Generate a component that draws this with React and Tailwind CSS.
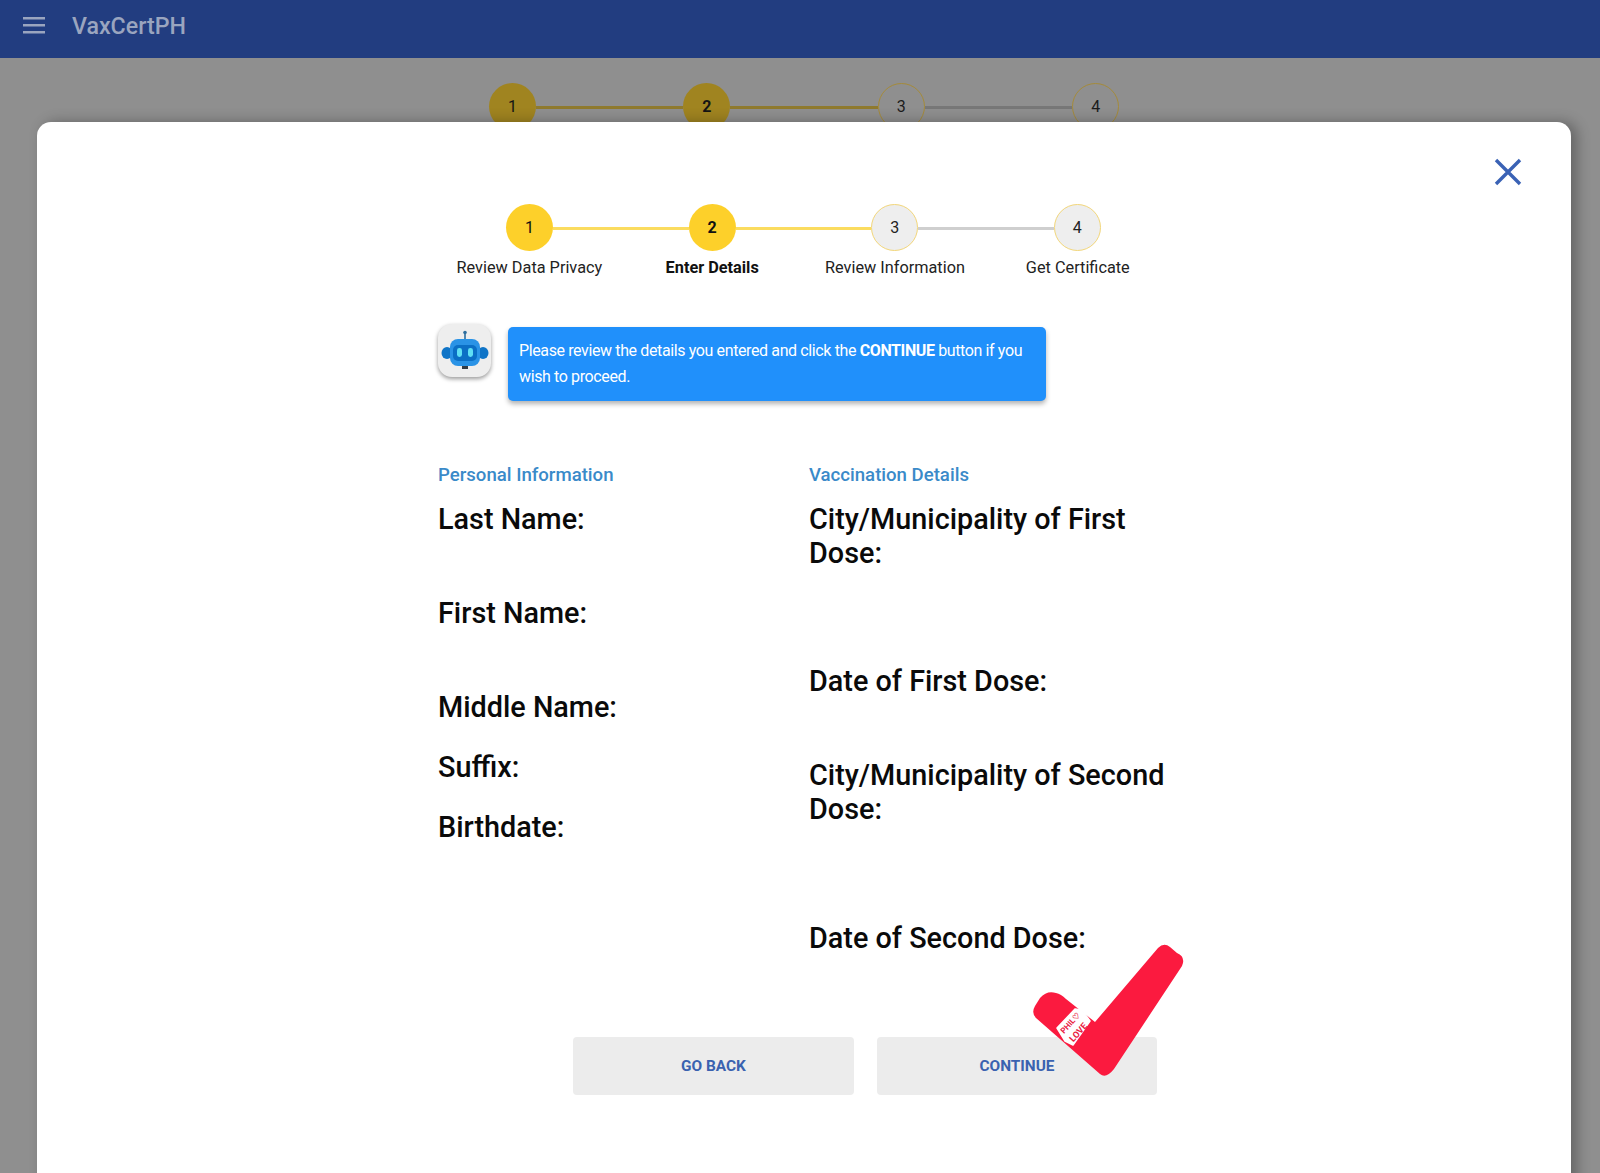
const steps = [
  { n: 1, label: "Review Data Privacy", state: "done" },
  { n: 2, label: "Enter Details", state: "active" },
  { n: 3, label: "Review Information", state: "todo" },
  { n: 4, label: "Get Certificate", state: "todo" },
];

function Circle({ n, state, dim }) {
  const styles = dim
    ? state === "todo"
      ? "border-[1.5px] border-[#a58b3a] bg-[#8f8f8f] text-[#1c1c1c]"
      : "bg-[#a08420] text-[#141414]"
    : state === "todo"
    ? "border-[1.5px] border-[#f2d67a] bg-[#eeeeee] text-[#222222]"
    : "bg-[#fdd02a] text-[#111111]";
  return (
    <div
      className={`flex h-[47px] w-[47px] shrink-0 items-center justify-center rounded-full text-base ${state === "active" ? "font-bold" : "font-normal"} ${styles}`}
    >
      {n}
    </div>
  );
}

function StepLine({ on, dim, width }) {
  const color = dim
    ? on
      ? "bg-[#8f7a2e]"
      : "bg-[#777777]"
    : on
    ? "bg-[#fbdc5f]"
    : "bg-[#cfcfcf]";
  return <div className={`mt-[2px] h-[3px] ${width} ${color}`} />;
}

function Circles({ dim, width }) {
  return (
    <div className="flex items-center">
      <Circle n={1} state="done" dim={dim} />
      <StepLine on dim={dim} width={width} />
      <Circle n={2} state="active" dim={dim} />
      <StepLine on dim={dim} width={width} />
      <Circle n={3} state="todo" dim={dim} />
      <StepLine dim={dim} width={width} />
      <Circle n={4} state="todo" dim={dim} />
    </div>
  );
}

function Robot() {
  return (
    <div className="flex h-[53px] w-[53px] shrink-0 items-center justify-center rounded-[14px] bg-[#eeeeee] shadow-[0_2px_4px_rgba(0,0,0,0.4)]">
      <svg width="48" height="44" viewBox="0 0 48 44">
        <rect x="23.2" y="4" width="1.6" height="8" fill="#2f6f9f" />
        <circle cx="24" cy="3.5" r="1.8" fill="#2f6f9f" />
        <ellipse cx="6" cy="24" rx="5.5" ry="6" fill="#0f74c7" />
        <ellipse cx="42" cy="24" rx="5.5" ry="6" fill="#0f74c7" />
        <rect x="9" y="10" width="30" height="27" rx="8" fill="#2a93e6" />
        <rect x="12" y="16" width="24" height="16" rx="5" fill="#0b6fc5" />
        <rect x="16" y="19" width="5" height="9" rx="2.4" fill="#5fe0f5" />
        <rect x="27" y="19" width="5" height="9" rx="2.4" fill="#5fe0f5" />
        <rect x="21" y="37" width="6" height="3" fill="#333b44" />
      </svg>
    </div>
  );
}

function Check() {
  return (
    <svg
      className="absolute left-[1030px] top-[943px]"
      width="156"
      height="136"
      viewBox="1030 943 156 136"
    >
      <path
        d="M1158 948 Q1164 942 1170 947 L1177 953 Q1186 957 1182 966 L1114 1069 Q1106 1079 1100 1074 L1036 1018 Q1031 1013 1035 1006 L1040 998 Q1047 990 1056 993 Q1061 994 1066 999 L1095 1022 Z"
        fill="#fb1a3f"
      />
      <path
        d="M1057 1028 L1075 1009 L1082 1010 L1090 1021 L1073 1045 L1065 1041 Z"
        fill="#ffffff"
        stroke="#ffffff"
        strokeWidth="1.5"
        strokeLinejoin="round"
      />
      <text
        transform="rotate(-48 1070 1023)"
        x="1070"
        y="1026"
        textAnchor="middle"
        fontSize="8"
        fontWeight="700"
        fill="#e9203f"
        fontFamily="Roboto, sans-serif"
      >
        PHIL♡
      </text>
      <text
        transform="rotate(-48 1078 1032)"
        x="1078"
        y="1035.5"
        textAnchor="middle"
        fontSize="9"
        fontWeight="700"
        fill="#e9203f"
        fontFamily="Roboto, sans-serif"
      >
        LOVE
      </text>
    </svg>
  );
}

function Field({ children, className }) {
  return (
    <p className={`text-[28.8px] font-medium leading-[34px] text-[#0a0a0a] ${className}`}>
      {children}
    </p>
  );
}

export default function App() {
  return (
    <div className="relative h-[1173px] w-[1600px] overflow-hidden bg-[#8f8f8f] font-['Roboto',sans-serif]">
      <header className="flex h-[58px] items-start bg-[#223d80] pl-[22px] pt-[14px]">
        <svg width="24" height="24" viewBox="0 0 24 24" className="mt-[-1px]">
          <path d="M1 4h22v2.4H1zM1 11h22v2.4H1zM1 18h22v2.4H1z" fill="#9aa5bf" />
        </svg>
        <span className="ml-[26px] mt-[-3px] text-[23.2px] font-medium leading-[30px] text-[#9aa5bf]">
          VaxCertPH
        </span>
      </header>
      <div className="flex pl-[489px] pt-[25px]">
        <Circles dim width="w-[147.4px]" />
      </div>

      <div className="absolute bottom-[-40px] left-[37px] top-[122px] w-[1534px] rounded-t-[14px] bg-white shadow-[6px_0_14px_rgba(0,0,0,0.3)]">
        <button className="absolute left-[1456px] top-[35px] text-[#3a62b5]">
          <svg width="30" height="30" viewBox="0 0 30 30">
            <path d="M3 3 27 27M27 3 3 27" stroke="#3a62b5" strokeWidth="3.4" fill="none" />
          </svg>
        </button>

        <div className="mx-auto w-[732px] pt-[82px]">
          <div className="flex pl-[68px]">
            <Circles width="w-[135.6px]" />
          </div>
          <div className="mt-[5px] flex">
            {steps.map((s) => (
              <div
                key={s.n}
                className={`w-[182.8px] text-center text-[16.3px] leading-[24px] ${s.state === "active" ? "font-bold text-[#111111]" : "text-[#222222]"}`}
              >
                {s.label}
              </div>
            ))}
          </div>

          <div className="mt-[44px] flex items-start">
            <Robot />
            <div className="ml-[17px] mt-[3px] w-[538px] rounded-[5px] bg-[#2090fb] py-[11px] pl-[11px] pr-[12px] text-base leading-[26px] tracking-[-0.38px] text-white shadow-[0_3px_5px_rgba(0,0,0,0.3)]">
              Please review the details you entered and click the <b>CONTINUE</b> button if you wish to proceed.
            </div>
          </div>

          <div className="mt-[62px] flex">
            <div className="w-[371px]">
              <h3 className="text-[18.6px] font-medium leading-[24px] text-[#3a8ac9]">Personal Information</h3>
              <Field className="mt-[15px]">Last Name:</Field>
              <Field className="mt-[60px]">First Name:</Field>
              <Field className="mt-[60px]">Middle Name:</Field>
              <Field className="mt-[26px]">Suffix:</Field>
              <Field className="mt-[26px]">Birthdate:</Field>
            </div>
            <div className="w-[361px]">
              <h3 className="text-[18.6px] font-medium leading-[24px] text-[#3a8ac9]">Vaccination Details</h3>
              <Field className="mt-[15px]">City/Municipality of First Dose:</Field>
              <Field className="mt-[94px]">Date of First Dose:</Field>
              <Field className="mt-[60px]">City/Municipality of Second Dose:</Field>
              <Field className="mt-[95px]">Date of Second Dose:</Field>
            </div>
          </div>

          <div className="ml-[135px] mt-[82px] flex w-[800px] gap-[23px]">
            <button className="h-[58px] w-[281px] rounded-[4px] bg-[#ececec] pt-[2px] text-[15.4px] font-bold text-[#3a62b0]">
              GO BACK
            </button>
            <button className="h-[58px] w-[280px] rounded-[4px] bg-[#ececec] pt-[2px] text-[15.4px] font-bold text-[#3a62b0]">
              CONTINUE
            </button>
          </div>
        </div>
      </div>
      <Check />
    </div>
  );
}
